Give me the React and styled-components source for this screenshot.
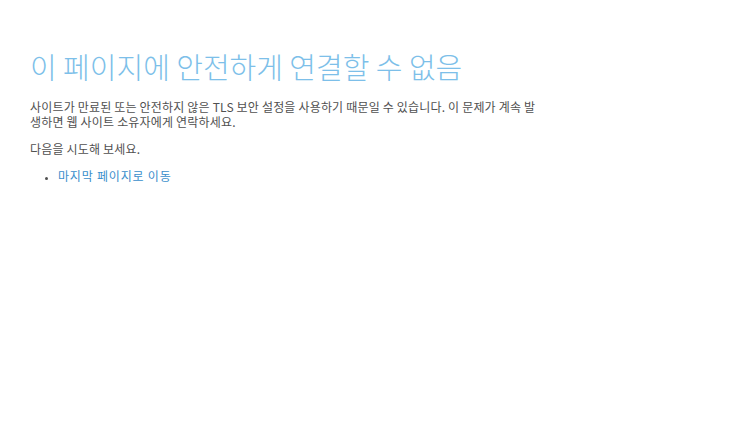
import React from 'react';
import styled, { createGlobalStyle } from 'styled-components';

const GlobalStyle = createGlobalStyle`
  html, body {
    margin: 0;
    padding: 0;
    background: #fff;
  }
  body {
    font-family: "Noto Sans CJK KR", "Noto Sans", sans-serif;
  }
`;

const Page = styled.main`
  padding: 44px 30px 0 30px;
  max-width: 510px;
`;

const Title = styled.h1`
  margin: 0 0 11px 0;
  font-size: 29px;
  font-weight: 300;
  line-height: 44px;
  color: #7dbfe9;
`;

const Text = styled.p`
  margin: 0 0 12px 0;
  font-size: 12px;
  line-height: 15px;
  letter-spacing: 0.18px;
  word-break: break-all;
  color: #505050;
`;

const List = styled.ul`
  margin: 0;
  padding-left: 28px;
  font-size: 12px;
  line-height: 15px;
  letter-spacing: 0.8px;
  color: #505050;
`;

const Item = styled.li`
  margin: 0;
  &::marker {
    font-size: 9px;
  }
`;

const Link = styled.a`
  color: #3a8fcc;
  text-decoration: none;
`;

export default function App() {
  return (
    <>
      <GlobalStyle />
      <Page>
        <Title>이 페이지에 안전하게 연결할 수 없음</Title>
        <Text>
          사이트가 만료된 또는 안전하지 않은 TLS 보안 설정을 사용하기 때문일 수 있습니다. 이 문제가 계속 발생하면 웹 사이트 소유자에게 연락하세요.
        </Text>
        <Text>다음을 시도해 보세요.</Text>
        <List>
          <Item>
            <Link href="#">마지막 페이지로 이동</Link>
          </Item>
        </List>
      </Page>
    </>
  );
}
